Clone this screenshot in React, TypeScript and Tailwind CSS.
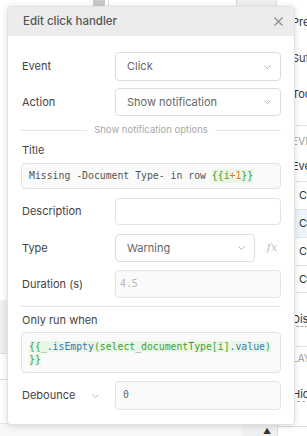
import React from "react";

const sans = { fontFamily: "Inter, 'Noto Sans', 'Liberation Sans', sans-serif" };
const mono = { fontFamily: "'DejaVu Sans Mono', 'Liberation Mono', monospace" };

function Chevron() {
  return (
    <svg width="7" height="4" viewBox="0 0 7 4" className="shrink-0">
      <path d="M0.5 0.5 L3.5 3.5 L6.5 0.5" fill="none" stroke="#b5b5b5" strokeWidth="1" />
    </svg>
  );
}

function Select({ value, className = "" }: { value: string; className?: string }) {
  return (
    <div
      className={`flex items-center justify-between rounded-[4px] border border-[#dcdcdc] bg-white pl-[11px] pr-[9px] text-[11px] text-[#666] ${className}`}
    >
      <span>{value}</span>
      <Chevron />
    </div>
  );
}

function Row({ label, children, className = "" }: { label: React.ReactNode; children: React.ReactNode; className?: string }) {
  return (
    <div className={`flex items-center ${className}`}>
      <div className="w-[94px] shrink-0 pl-[1px] text-[11px] text-[#444]">{label}</div>
      <div className="flex flex-1 items-center">{children}</div>
    </div>
  );
}

export default function App() {
  return (
    <div className="relative h-[436px] w-[307px] overflow-hidden bg-white" style={sans}>
      {/* background: top strip */}
      <div className="absolute left-0 top-0 flex h-[6px] w-[307px]">
        <div className="w-[93px]" />
        <div className="w-[12px] bg-[#c9c9c9]" />
        <div className="w-[3px]" />
        <div className="w-[129px] border-l border-r border-[#dedede] bg-white" />
        <div className="w-[40px] border-r border-[#dedede] bg-[#efefef]" />
        <div className="flex-1" />
      </div>

      {/* background: left strip */}
      <div className="absolute left-0 top-[300px] flex w-[10px] flex-col">
        <div className="h-[54px] border-b border-[#dedede] bg-[#efefef]" />
        <div className="h-[26px] border-b border-[#dedede]" />
      </div>

      {/* background: bottom strip */}
      <div className="absolute left-0 top-[423px] flex h-[13px] w-[307px]">
        <div className="w-[242px] border-t border-[#e3e3e3] bg-[#f7f7f7]" />
        <div className="flex w-[35px] items-end justify-end bg-[#f0f0f0] pr-[6px]">
          <span className="text-[8px] leading-[10px] text-[#333]">▲</span>
        </div>
        <div className="flex-1 border-l border-[#dedede] pt-[3px]">
          <div className="border-t border-[#dedede]" />
        </div>
      </div>

      {/* background: right panel (partly hidden behind the popover) */}
      <div className="absolute left-[292px] top-0 flex w-[15px] flex-col overflow-hidden whitespace-nowrap text-[11px] text-[#333]">
        <div className="h-[4px]" />
        <div className="flex h-[36px] items-center">Pre</div>
        <div className="flex h-[36px] items-center">Suf</div>
        <div className="flex h-[36px] items-center">Too</div>
        <div className="h-[14px] border-b border-[#e3e3e3]" />
        <div className="flex h-[30px] items-center text-[10px] tracking-wide text-[#999]">EVE</div>
        <div className="flex h-[25px] items-start pt-[2px]">Eve</div>
        <div className="flex h-[28px] items-center border-t border-[#e3e3e3] pl-[7px]">C</div>
        <div className="flex h-[28px] items-center border-t border-[#e3e3e3] bg-[#eef4fc] pl-[7px]">C</div>
        <div className="flex h-[28px] items-center border-t border-[#e3e3e3] pl-[7px]">C</div>
        <div className="flex h-[28px] items-center border-t border-[#e3e3e3] border-b pl-[7px]">C</div>
        <div className="flex h-[53px] items-center">
          <span className="border-b border-dashed border-[#aaa] leading-[14px]">Dis</span>
        </div>
        <div className="h-[0px] border-t border-[#e3e3e3]" />
        <div className="flex h-[22px] items-center text-[10px] text-[#999]">LAY</div>
        <div className="flex h-[50px] items-center">
          <span className="border-b border-dashed border-[#aaa] leading-[14px]">Hid</span>
        </div>
      </div>

      {/* popover */}
      <div className="absolute left-[7px] top-[6px] w-[288px] rounded-[4px] border border-[#e2e2e2] bg-white shadow-[0_1px_6px_rgba(0,0,0,0.14)]">
        <div className="flex h-[29px] items-center justify-between rounded-t-[4px] bg-[#ececec] pl-[15px] pr-[11px]">
          <span className="text-[11.5px] font-medium text-[#555]">Edit click handler</span>
          <svg width="9" height="9" viewBox="0 0 9 9">
            <path d="M0.5 0.5 L8.5 8.5 M8.5 0.5 L0.5 8.5" stroke="#8a8a8a" strokeWidth="1.1" />
          </svg>
        </div>

        <div className="px-[13px] pb-[14px] pt-[16px]">
          <Row label="Event">
            <Select value="Click" className="h-[29px] flex-1" />
          </Row>
          <Row label="Action" className="mt-[7px]">
            <Select value="Show notification" className="h-[28px] flex-1" />
          </Row>

          <div className="mt-[8px] flex h-[12px] items-center gap-[7px]">
            <div className="h-px flex-1 bg-[#e3e3e3]" />
            <span className="text-[9.5px] text-[#a8a8a8]">Show notification options</span>
            <div className="h-px flex-1 bg-[#e3e3e3]" />
          </div>

          <div className="mt-[7px] pl-[1px] text-[11px] leading-[14px] text-[#444]">Title</div>
          <div
            className="mt-[6px] flex h-[26px] items-center rounded-[4px] border border-[#e3e3e3] bg-[#fafafa] pl-[7px] text-[9.8px] text-[#555]"
            style={mono}
          >
            <span className="whitespace-pre">Missing -Document Type- in row </span>
            <span className="bg-[#eaf6e6]">
              <span className="text-[#3e9f34]">{"{{i"}</span>
              <span className="text-[#e2762e]">+1</span>
              <span className="text-[#3e9f34]">{"}}"}</span>
            </span>
          </div>

          <Row label="Description" className="mt-[9px]">
            <div className="h-[27px] flex-1 rounded-[4px] border border-[#e3e3e3] bg-white" />
          </Row>

          <Row label="Type" className="mt-[9px]">
            <Select value="Warning" className="h-[28px] w-[140px]" />
            <div className="flex flex-1 justify-center pl-[8px]">
              <span className="text-[11px] italic text-[#bdbdbd]" style={{ fontFamily: "'DejaVu Serif', serif" }}>
                fx
              </span>
            </div>
          </Row>

          <Row label="Duration (s)" className="mt-[8px]">
            <div
              className="flex h-[28px] flex-1 items-center rounded-[4px] border border-[#e3e3e3] bg-[#fafafa] pl-[4px] text-[9.8px] text-[#b5b5b5]"
              style={mono}
            >
              4.5
            </div>
          </Row>

          <div className="mt-[8px] h-px bg-[#e3e3e3]" />

          <div className="mt-[6px] pl-[1px] text-[11px] leading-[14px] text-[#444]">Only run when</div>
          <div
            className="mt-[5px] h-[41px] rounded-[4px] border border-[#e3e3e3] bg-[#fafafa] pl-[7px] pt-[7px] text-[9.8px] leading-[13px]"
            style={mono}
          >
            <div>
              <span className="bg-[#eaf6e6]">
                <span className="text-[#3e9f34]">{"{{_"}</span>
                <span className="text-[#3b78b5]">.isEmpty</span>
                <span className="text-[#3e9f34]">(select_documentType[i]</span>
                <span className="text-[#3b78b5]">.value</span>
                <span className="text-[#3e9f34]">)</span>
              </span>
            </div>
            <div>
              <span className="bg-[#eaf6e6] text-[#3e9f34]">{"}}"}</span>
            </div>
          </div>

          <div className="mt-[8px] flex items-center">
            <div className="flex w-[94px] shrink-0 items-center pl-[1px] text-[11px] text-[#444]">
              <span>Debounce</span>
              <span className="ml-[17px]">
                <Chevron />
              </span>
            </div>
            <div
              className="flex h-[29px] flex-1 items-center rounded-[4px] border border-[#e3e3e3] bg-[#fafafa] pl-[7px] text-[9.8px] text-[#666]"
              style={mono}
            >
              0
            </div>
          </div>
        </div>
      </div>
    </div>
  );
}
